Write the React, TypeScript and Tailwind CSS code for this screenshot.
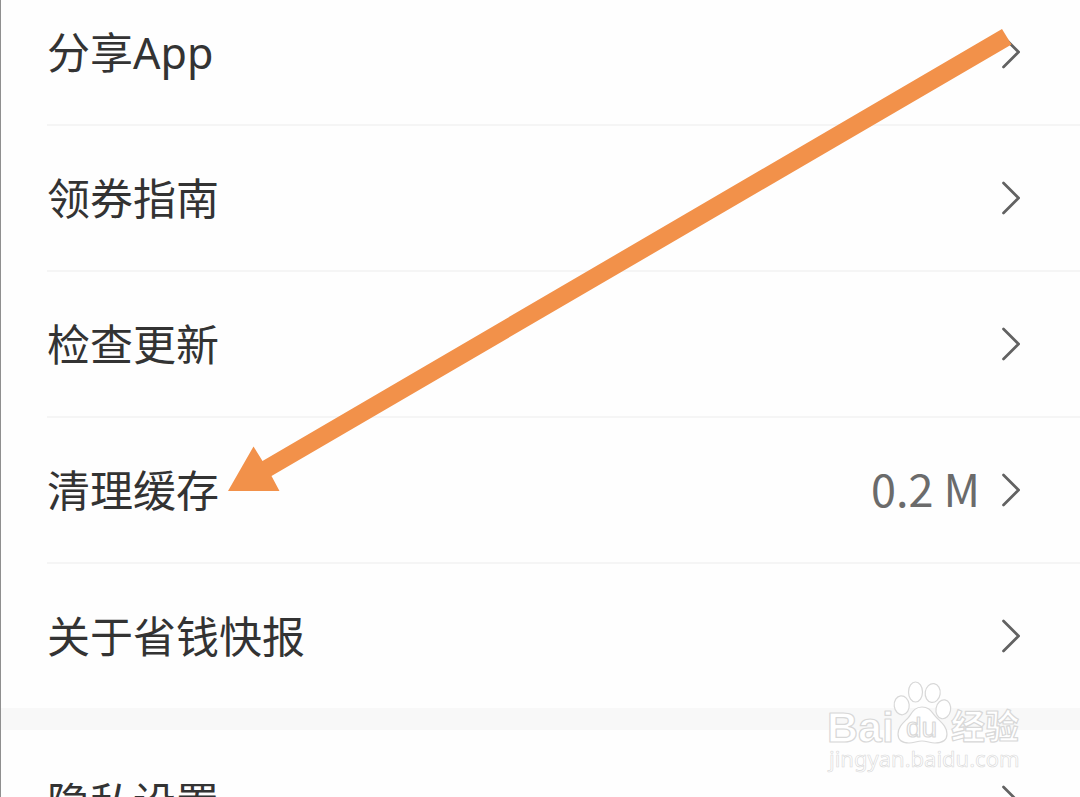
type SettingItem = {
  label: string;
  value?: string;
};

const mainItems: SettingItem[] = [
  { label: "分享App" },
  { label: "领券指南" },
  { label: "检查更新" },
  { label: "清理缓存", value: "0.2 M" },
  { label: "关于省钱快报" },
];

const privacyItems: SettingItem[] = [{ label: "隐私设置" }];

const Chevron = () => (
  <svg
    className="h-9 w-5 shrink-0"
    viewBox="0 0 20 36"
    fill="none"
    stroke="#626262"
    strokeWidth="2.7"
    strokeLinecap="round"
    aria-hidden="true"
  >
    <path d="M3.5 3 L18.5 18 L3.5 33" />
  </svg>
);

const SettingRow = ({ label, value }: SettingItem) => (
  <li className="ml-[46px] border-b-2 border-[#f5f5f5] last:border-b-0">
    <button
      type="button"
      className="flex h-36 w-full items-center justify-between pr-[60px] text-left"
    >
      <span className="pt-0.5 text-[43px] leading-[60px] text-[#333333]">
        {label}
      </span>
      <span className="flex items-center gap-5">
        {value && (
          <span className="pb-1 font-['Noto_Sans_CJK_SC',sans-serif] text-[45px] leading-[60px] text-[#6b6b6b]">
            {value}
          </span>
        )}
        <Chevron />
      </span>
    </button>
  </li>
);

const SettingList = ({ items }: { items: SettingItem[] }) => (
  <ul>
    {items.map((item) => (
      <SettingRow key={item.label} {...item} />
    ))}
  </ul>
);

// Arrow pointing at the cache row
const PointerArrow = () => (
  <svg
    className="pointer-events-none absolute top-[28px] left-[226px] h-[464px] w-[785px]"
    viewBox="227 28 785 464"
    aria-hidden="true"
  >
    <path
      d="M1002 29 L1011.5 44.5 L271.5 476 L279.5 491 L228 491 L253.5 446.5 L262.5 461 Z"
      fill="#f2914a"
    />
  </svg>
);

const Watermark = () => (
  <svg
    className="pointer-events-none absolute right-[56px] bottom-[19px] h-[98px] w-[198px]"
    viewBox="826 680 198 98"
    fill="#ffffff"
    stroke="#d8d8d8"
    strokeWidth="1.2"
    strokeLinejoin="round"
  >
    <text x="827" y="742" fontFamily="Liberation Sans, sans-serif" fontWeight="700" fontSize="43">
      Bai
    </text>
    <ellipse cx="915.5" cy="692" rx="7" ry="10" />
    <ellipse cx="932.7" cy="693" rx="7.5" ry="9.5" transform="rotate(8 932.7 693)" />
    <ellipse cx="901.7" cy="705.3" rx="7.5" ry="9.5" transform="rotate(-6 901.7 705.3)" />
    <ellipse cx="943.3" cy="709.3" rx="7.3" ry="9.5" transform="rotate(10 943.3 709.3)" />
    <path d="M922 707 C930 707 932 713 937 718 C942 723 947 727 947 734 C947 741 941 743 935 743 C930 743 927 741 922 741 C917 741 914 743 909 743 C902 743 898 740 898 734 C898 727 903 723 908 718 C912 713 914 707 922 707 Z" />
    <text x="906" y="737" fontFamily="Liberation Sans, sans-serif" fontSize="28">
      du
    </text>
    <text x="951" y="739" fontFamily="Noto Sans CJK SC, sans-serif" fontWeight="700" fontSize="34">
      经验
    </text>
    <text x="829" y="767" fontFamily="Noto Sans, sans-serif" fontSize="22" strokeWidth="0.6">
      jingyan.baidu.com
    </text>
  </svg>
);

const App = () => {
  return (
    <main className="relative h-screen overflow-hidden border-l border-[#8f8f8f] bg-[#fefefe] font-['Noto_Sans','Noto_Sans_CJK_SC',sans-serif]">
      <div className="-mt-5">
        <SettingList items={mainItems} />
        <div className="h-[22px] bg-[#f8f8f8]" />
        <SettingList items={privacyItems} />
      </div>
      <PointerArrow />
      <Watermark />
    </main>
  );
};

export default App;
